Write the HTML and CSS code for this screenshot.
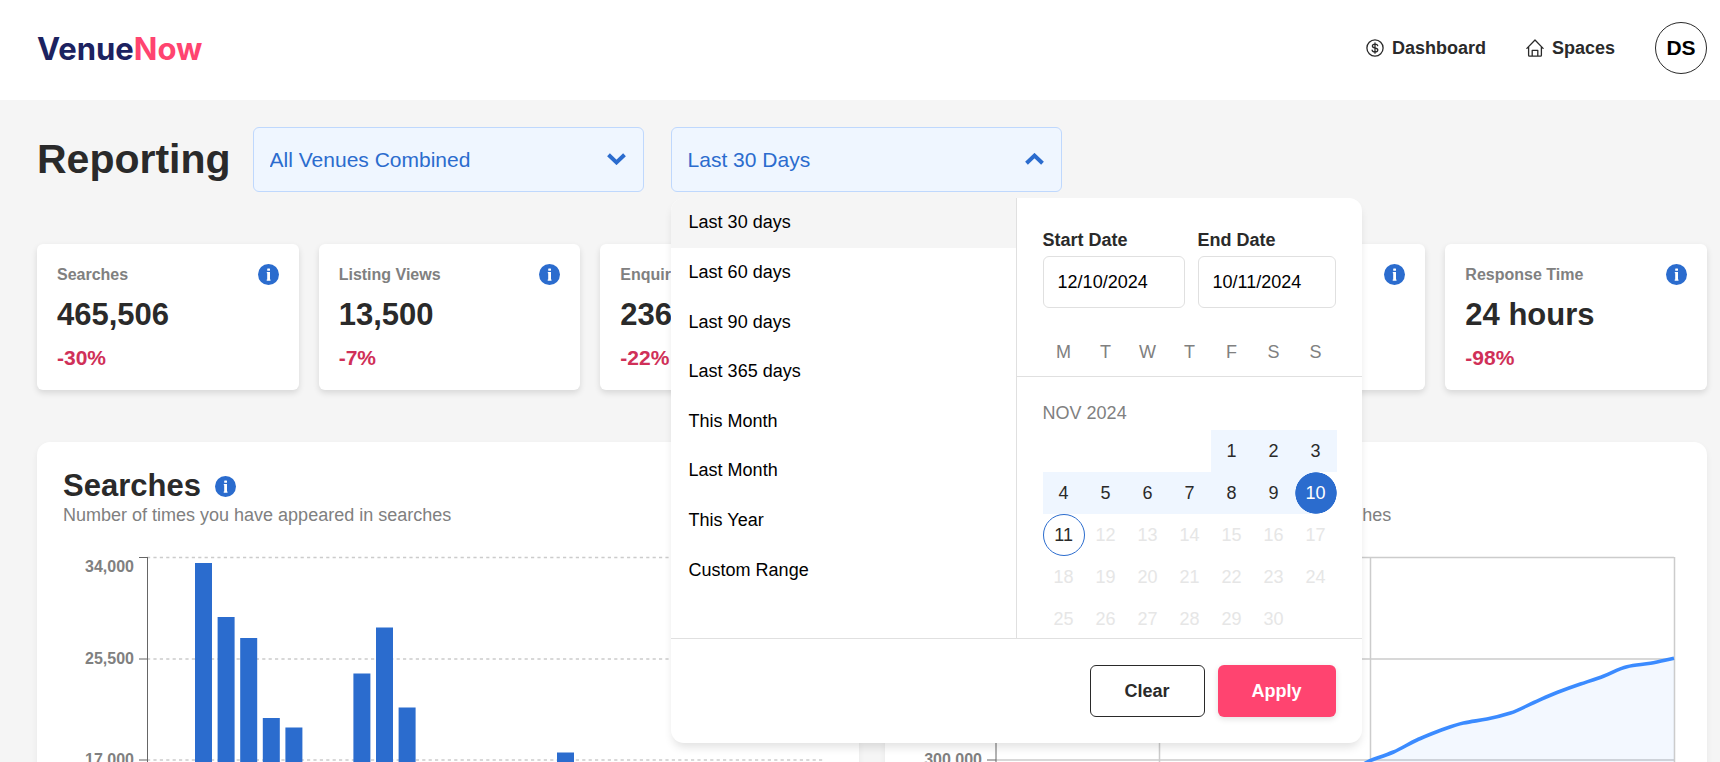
FILE: index.html
```html
<!DOCTYPE html>
<html lang="en">
<head>
    <meta charset="UTF-8">
    <meta name="viewport" content="width=device-width, initial-scale=1.0">
    <title>VenueNow - Reporting</title>
    <link rel="stylesheet" href="styles.css">
</head>
<body>
    <!-- Shared info icon -->
    <svg class="sprite" aria-hidden="true">
        <symbol id="info" viewBox="0 0 21 21">
            <circle cx="10.5" cy="10.5" r="10.5" fill="#2b6cce"/>
            <rect x="9.2" y="4.4" width="2.8" height="2.4" rx="0.5" fill="#fff"/>
            <path d="M8.8 8H12v7.4h.5v1.3H8.7v-1.3h.5V9.3h-.4z" fill="#fff"/>
        </symbol>
    </svg>

    <header class="header">
        <a class="logo" href="#">Venue<span>Now</span></a>
        <nav class="nav">
            <a class="nav-link" href="#">
                <svg width="18" height="18" viewBox="0 0 18 18" fill="none" stroke="#2a2a2a" stroke-width="1.3" stroke-linecap="round">
                    <circle cx="9" cy="9" r="8.1"/>
                    <path d="M11.7 6.7C11.5 5.6 10.4 5.1 9 5.1S6.4 5.7 6.4 7 7.5 8.7 9 9s2.8.8 2.8 2.1-1.3 1.9-2.8 1.9-2.7-.6-2.9-1.8M9 3.8v10.4"/>
                </svg>
                Dashboard
            </a>
            <a class="nav-link" href="#">
                <svg width="18" height="18" viewBox="0 0 18 18" fill="none" stroke="#2a2a2a" stroke-width="1.3" stroke-linecap="round" stroke-linejoin="round">
                    <path d="M.9 9.4L9 1l8.1 8.4M2.6 8v8.2q0 .9.9.9h11q.9 0 .9-.9V8M6.2 17v-5.6h5.6V17"/>
                </svg>
                Spaces
            </a>
            <button class="avatar" type="button">DS</button>
        </nav>
    </header>

    <main class="page">
        <div class="toolbar">
            <h1 class="page-title">Reporting</h1>
            <div class="picker">
                <select class="picker-control" aria-label="Venue">
                    <option>All Venues Combined</option>
                </select>
                <svg class="chevron" width="19" height="12" viewBox="0 0 19 12" fill="none" stroke="#2b6cce" stroke-width="4"><path d="M1.5 1.8L9.5 9.4L17.5 1.8"/></svg>
            </div>
            <div class="picker">
                <button class="picker-control" type="button" aria-expanded="true" aria-controls="range-menu">Last 30 Days</button>
                <svg class="chevron" width="19" height="12" viewBox="0 0 19 12" fill="none" stroke="#2b6cce" stroke-width="4"><path d="M1.5 10.2L9.5 2.6L17.5 10.2"/></svg>

                <!-- Date range menu -->
                <div class="menu" id="range-menu">
                    <div class="menu-body">
                        <div class="presets">
                            <button class="preset active" type="button">Last 30 days</button>
                            <button class="preset" type="button">Last 60 days</button>
                            <button class="preset" type="button">Last 90 days</button>
                            <button class="preset" type="button">Last 365 days</button>
                            <button class="preset" type="button">This Month</button>
                            <button class="preset" type="button">Last Month</button>
                            <button class="preset" type="button">This Year</button>
                            <button class="preset" type="button">Custom Range</button>
                        </div>
                        <div class="calendar">
                            <div class="dates">
                                <div class="date-field">
                                    <label for="start">Start Date</label>
                                    <input id="start" type="text" value="12/10/2024">
                                </div>
                                <div class="date-field">
                                    <label for="end">End Date</label>
                                    <input id="end" type="text" value="10/11/2024">
                                </div>
                            </div>
                            <div class="weekdays">
                                <span>M</span><span>T</span><span>W</span><span>T</span><span>F</span><span>S</span><span>S</span>
                            </div>
                            <div class="month">
                                <div class="month-name">NOV 2024</div>
                                <div class="days">
                                    <button class="day in-range first" type="button">1</button>
                                    <button class="day in-range" type="button">2</button>
                                    <button class="day in-range" type="button">3</button>
                                    <button class="day in-range" type="button">4</button>
                                    <button class="day in-range" type="button">5</button>
                                    <button class="day in-range" type="button">6</button>
                                    <button class="day in-range" type="button">7</button>
                                    <button class="day in-range" type="button">8</button>
                                    <button class="day in-range" type="button">9</button>
                                    <button class="day selected" type="button">10</button>
                                    <button class="day today" type="button">11</button>
                                    <button class="day" type="button" disabled>12</button>
                                    <button class="day" type="button" disabled>13</button>
                                    <button class="day" type="button" disabled>14</button>
                                    <button class="day" type="button" disabled>15</button>
                                    <button class="day" type="button" disabled>16</button>
                                    <button class="day" type="button" disabled>17</button>
                                    <button class="day" type="button" disabled>18</button>
                                    <button class="day" type="button" disabled>19</button>
                                    <button class="day" type="button" disabled>20</button>
                                    <button class="day" type="button" disabled>21</button>
                                    <button class="day" type="button" disabled>22</button>
                                    <button class="day" type="button" disabled>23</button>
                                    <button class="day" type="button" disabled>24</button>
                                    <button class="day" type="button" disabled>25</button>
                                    <button class="day" type="button" disabled>26</button>
                                    <button class="day" type="button" disabled>27</button>
                                    <button class="day" type="button" disabled>28</button>
                                    <button class="day" type="button" disabled>29</button>
                                    <button class="day" type="button" disabled>30</button>
                                </div>
                            </div>
                        </div>
                    </div>
                    <div class="menu-footer">
                        <button class="btn btn-outline" type="button">Clear</button>
                        <button class="btn btn-primary" type="button">Apply</button>
                    </div>
                </div>
            </div>
        </div>

        <section class="stats">
            <div class="card">
                <div class="card-head">Searches <svg class="info"><use href="#info"/></svg></div>
                <div class="card-value">465,506</div>
                <div class="card-change">-30%</div>
            </div>
            <div class="card">
                <div class="card-head">Listing Views <svg class="info"><use href="#info"/></svg></div>
                <div class="card-value">13,500</div>
                <div class="card-change">-7%</div>
            </div>
            <div class="card">
                <div class="card-head">Enquiries <svg class="info"><use href="#info"/></svg></div>
                <div class="card-value">236</div>
                <div class="card-change">-22%</div>
            </div>
            <div class="card">
                <div class="card-head">Bookings <svg class="info"><use href="#info"/></svg></div>
            </div>
            <div class="card">
                <div class="card-head">Revenue <svg class="info"><use href="#info"/></svg></div>
            </div>
            <div class="card">
                <div class="card-head">Response Time <svg class="info"><use href="#info"/></svg></div>
                <div class="card-value">24 hours</div>
                <div class="card-change">-98%</div>
            </div>
        </section>

        <section class="charts">
            <div class="panel">
                <h2 class="panel-title">Searches <svg class="info"><use href="#info"/></svg></h2>
                <p class="panel-sub">Number of times you have appeared in searches</p>
                <svg class="chart" viewBox="0 0 770 440">
                    <path d="M84 12.5H762M84 114H762M84 215H762M84 316H762" stroke="#ccc" stroke-width="1.5" stroke-dasharray="3.2 3.2"/>
                    <g fill="#2b6cce">
                        <rect x="132" y="18" width="17" height="400"/>
                        <rect x="154.6" y="72" width="17" height="346"/>
                        <rect x="177.2" y="93" width="17" height="325"/>
                        <rect x="199.8" y="173" width="17" height="245"/>
                        <rect x="222.4" y="182.5" width="17" height="235.5"/>
                        <rect x="290.4" y="128.5" width="17" height="289.5"/>
                        <rect x="313" y="82.5" width="17" height="335.5"/>
                        <rect x="335.6" y="162.5" width="17" height="255.5"/>
                        <rect x="494" y="207.5" width="17" height="210.5"/>
                    </g>
                    <path d="M84.5 12V418M76 12.5h9M76 114h9M76 215h9M76 316h9" stroke="#666" fill="none"/>
                    <g class="axis-labels">
                        <text x="71" y="27">34,000</text>
                        <text x="71" y="119">25,500</text>
                        <text x="71" y="220">17,000</text>
                        <text x="71" y="321">8,500</text>
                    </g>
                </svg>
            </div>
            <div class="panel">
                <h2 class="panel-title">Cumulative Searches <svg class="info"><use href="#info"/></svg></h2>
                <p class="panel-sub">Cumulative number of times you have appeared in searches</p>
                <svg class="chart" viewBox="0 0 770 440">
                    <path d="M85 12.5H763M85 114H763M85 215H763M85 316H763M248.5 12V418M459.5 12V418M763.5 12V418" stroke="#ccc" stroke-width="1.5"/>
                    <path d="M85 12V418M76 12.5h9M76 114h9M76 215h9M76 316h9" stroke="#666"/>
                    <path d="M85 410L459 215.7C467 212.7 474.5 210.3 482.5 207S498 198.5 506 195S521 188.3 529 185.5S544.5 179.7 552.5 178S568 175.6 576 174S591.5 170.5 599.5 168S615 161 623 157.5S638 150.6 646 147.5S661.5 141.7 669.5 139S685 134 693 131S708 123.4 716 121.7S731.5 119.6 739.5 118.3S755 115 763 113.3V418H85Z" fill="#3b8bff" fill-opacity="0.06"/>
                    <path d="M85 410L459 215.7C467 212.7 474.5 210.3 482.5 207S498 198.5 506 195S521 188.3 529 185.5S544.5 179.7 552.5 178S568 175.6 576 174S591.5 170.5 599.5 168S615 161 623 157.5S638 150.6 646 147.5S661.5 141.7 669.5 139S685 134 693 131S708 123.4 716 121.7S731.5 119.6 739.5 118.3S755 115 763 113.3" fill="none" stroke="#3b8bff" stroke-width="3.6"/>
                    <g class="axis-labels">
                        <text x="71" y="27">600,000</text>
                        <text x="71" y="119">450,000</text>
                        <text x="71" y="220">300,000</text>
                        <text x="71" y="321">150,000</text>
                    </g>
                </svg>
            </div>
        </section>
    </main>
</body>
</html>
```

FILE: styles.css
```css
* {
    box-sizing: border-box;
}

body {
    margin: 0;
    height: 100vh;
    overflow: hidden;
    background-color: #f5f5f5;
    color: #2a2a2a;
    font-family: "Liberation Sans", Arial, sans-serif;
    font-size: 18px;
}

button, input, select {
    font: inherit;
    color: inherit;
}

button {
    cursor: pointer;
}

h1, h2, p {
    margin: 0;
}

.sprite {
    display: none;
}

/* Header */
.header {
    display: flex;
    justify-content: space-between;
    align-items: center;
    height: 100px;
    padding: 0 13px 4px 37px;
    background-color: #fff;
}

.logo {
    color: #1c2260;
    font-family: Inter, sans-serif;
    font-size: 31px;
    font-weight: 700;
    text-decoration: none;
}

.logo span {
    color: #ff4470;
}

.nav {
    display: flex;
    align-items: center;
    gap: 40px;
}

.nav-link {
    display: flex;
    align-items: center;
    gap: 8px;
    color: #2a2a2a;
    font-weight: 700;
    text-decoration: none;
}

.avatar {
    width: 52px;
    height: 52px;
    padding: 0;
    border: 1px solid #2a2a2a;
    border-radius: 50%;
    background-color: #fff;
    color: #000;
    font-size: 21px;
    font-weight: 700;
}

/* Title row */
.page {
    padding: 27px 13px 27px 37px;
}

.toolbar {
    display: flex;
    align-items: center;
    margin-bottom: 52px;
}

.page-title {
    margin-right: 22px;
    font-size: 41px;
}

.picker {
    position: relative;
    width: 391px;
    margin-right: 27px;
}

.picker-control {
    display: block;
    width: 100%;
    height: 65px;
    padding: 0 16px;
    border: 1px solid #bfd8fd;
    border-radius: 6px;
    background-color: #eff6ff;
    color: #2b6cce;
    font-size: 21px;
    text-align: left;
    appearance: none;
}

.chevron {
    position: absolute;
    top: 26px;
    right: 18px;
    pointer-events: none;
}

/* Date range menu */
.menu {
    position: absolute;
    top: 71px;
    left: 0;
    z-index: 10;
    width: 691px;
    overflow: hidden;
    border-radius: 13px;
    background-color: #fff;
    box-shadow: 0 6px 10px -2px rgba(0, 0, 0, 0.12);
}

.menu-body {
    display: grid;
    grid-template-columns: 1fr 346px;
    height: 441px;
    overflow: hidden;
    border-bottom: 1px solid #e0e0e0;
}

.presets {
    display: grid;
    grid-template-rows: repeat(8, 1fr);
    padding-bottom: 43px;
}

.preset {
    padding: 0 18px;
    border: 0;
    background-color: #fff;
    color: #000;
    text-align: left;
}

.preset.active {
    background-color: #f5f5f5;
}

.calendar {
    height: 440px;
    overflow: hidden;
    border-left: 1px solid #e0e0e0;
}

.dates {
    display: grid;
    grid-template-columns: 142px 1fr;
    gap: 13px;
    padding: 26px 26px 20px;
}

.date-field label {
    display: block;
    font-weight: 700;
    line-height: 32px;
}

.date-field input {
    display: block;
    width: 100%;
    height: 52px;
    padding: 0 14px;
    border: 1px solid #e0e0e0;
    border-radius: 6px;
    background-color: #fff;
    color: #000;
}

.weekdays {
    display: grid;
    grid-template-columns: repeat(7, 42px);
    padding: 0 26px;
    border-bottom: 1px solid #e0e0e0;
    color: #808080;
    line-height: 48px;
    text-align: center;
}

.month {
    padding: 26px 26px 0;
}

.month-name {
    margin-bottom: 6px;
    color: #808080;
    line-height: 21px;
}

.days {
    display: grid;
    grid-template-columns: repeat(7, 42px);
    grid-auto-rows: 42px;
}

.day {
    padding: 0;
    border: 0;
    background-color: transparent;
}

.day:disabled {
    color: #e6e6e6;
}

.day.first {
    grid-column-start: 5;
}

.day.in-range {
    background-color: #eff6ff;
}

/* the range tint runs on behind the left half of the circle */
.day.selected {
    background:
        radial-gradient(circle closest-side, #2b6cce 97%, transparent 100%),
        linear-gradient(90deg, #eff6ff 50%, transparent 50%);
    color: #fff;
}

.day.today {
    border: 1px solid #2b6cce;
    border-radius: 50%;
}

.menu-footer {
    display: flex;
    justify-content: flex-end;
    gap: 13px;
    padding: 26px;
}

.btn {
    height: 52px;
    padding: 0 34px;
    border-radius: 6px;
    font-weight: 700;
}

.btn-outline {
    border: 1px solid #2a2a2a;
    background-color: #fff;
}

.btn-primary {
    border: 0;
    background-color: #ff4470;
    color: #fff;
    box-shadow: 0 2px 6px rgba(0, 0, 0, 0.12);
}

/* Stat cards */
.stats {
    display: grid;
    grid-template-columns: repeat(6, 1fr);
    gap: 20px;
    margin-bottom: 52px;
}

.card {
    min-height: 146px;
    padding: 20px;
    border-radius: 6px;
    background-color: #fff;
    box-shadow: 0 3px 6px rgba(0, 0, 0, 0.12);
}

.card-head {
    display: flex;
    justify-content: space-between;
    align-items: center;
    margin-bottom: 12px;
    color: #808080;
    font-size: 16px;
    font-weight: 700;
    line-height: 21px;
}

.card-value {
    margin-bottom: 13px;
    font-size: 31px;
    font-weight: 700;
    line-height: 36px;
}

.card-change {
    color: #d03058;
    font-size: 21px;
    font-weight: 700;
    line-height: 24px;
}

.info {
    flex: none;
    width: 21px;
    height: 21px;
}

/* Charts */
.charts {
    display: grid;
    grid-template-columns: repeat(2, 1fr);
    gap: 26px;
}

.panel {
    padding: 26px;
    border-radius: 13px;
    background-color: #fff;
    box-shadow: 0 3px 6px rgba(0, 0, 0, 0.06);
}

.panel-title {
    display: flex;
    align-items: center;
    gap: 14px;
    font-size: 31px;
    line-height: 36px;
}

.panel-sub {
    margin-bottom: 19px;
    color: #808080;
    line-height: 22px;
}

.chart {
    display: block;
    width: 100%;
}

.axis-labels {
    fill: #808080;
    font-size: 16px;
    font-weight: 700;
    text-anchor: end;
}
```
